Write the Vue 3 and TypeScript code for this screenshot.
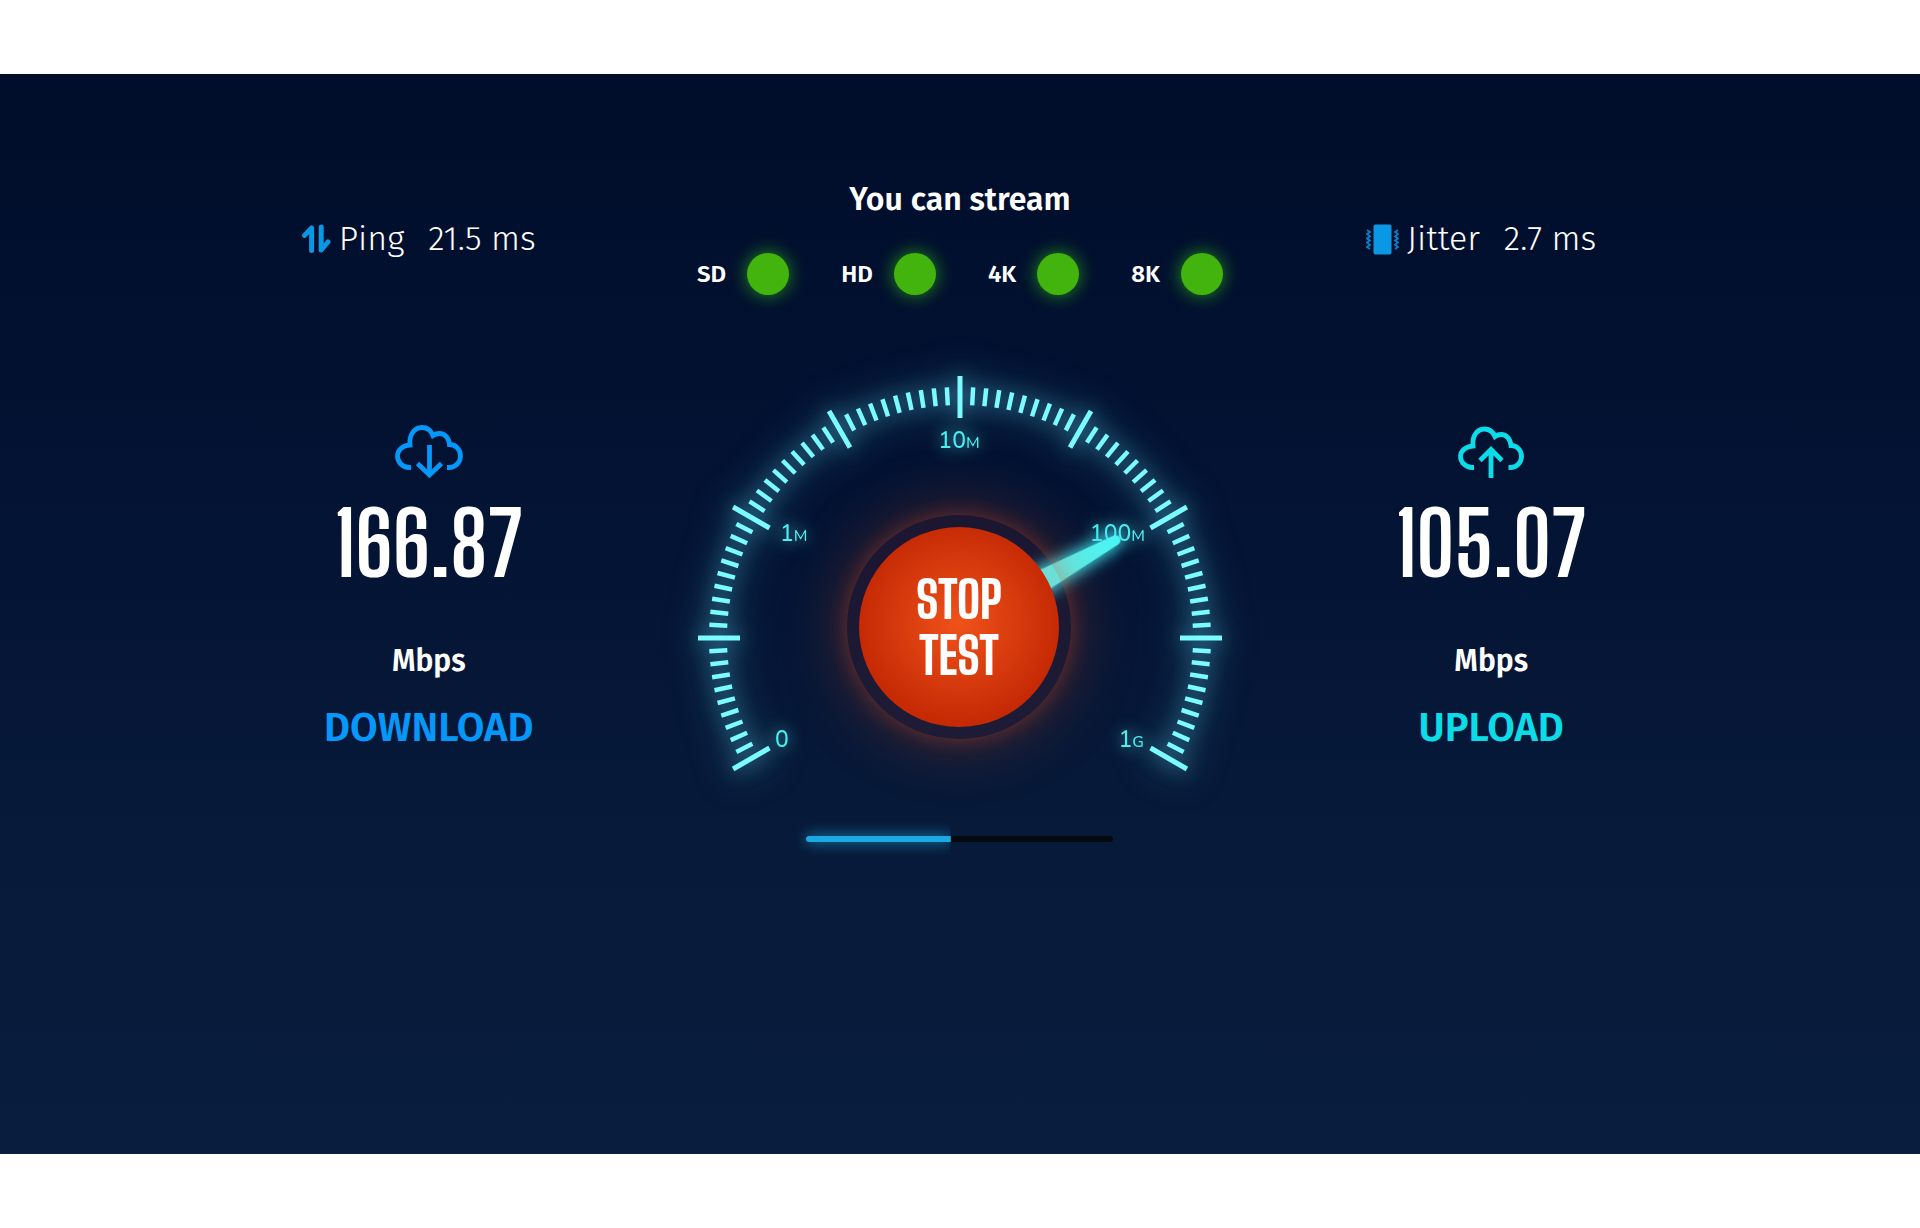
<script setup lang="ts">
interface Tick {
  angle: number
  major: boolean
}

interface GaugeLabel {
  x: number
  y: number
  value: string
  suffix: string
  anchor: 'start' | 'middle' | 'end'
}

const streams: string[] = ['SD', 'HD', '4K', '8K']

// The dial sweeps from -120° to 120°, with a long tick every 30°.
const ticks: Tick[] = Array.from({ length: 81 }, (_, i) => ({
  angle: -120 + i * 3,
  major: i % 10 === 0,
}))

const labels: GaugeLabel[] = [
  { x: 95, y: 387, value: '0', suffix: '', anchor: 'start' },
  { x: 100, y: 181, value: '1', suffix: 'M', anchor: 'start' },
  { x: 279, y: 88, value: '10', suffix: 'M', anchor: 'middle' },
  { x: 465, y: 181, value: '100', suffix: 'M', anchor: 'end' },
  { x: 464, y: 387, value: '1', suffix: 'G', anchor: 'end' },
]

const needleAngle = -29
const progress = 47
</script>

<template>
  <main class="page">
    <section class="panel">
      <div class="board">
        <div class="stat">
          <svg class="stat-icon" width="29" height="30" viewBox="0 0 29 30" aria-hidden="true">
            <g fill="none" stroke="#0a97e4" stroke-width="5" stroke-linecap="round" stroke-linejoin="round">
              <path d="M2.6 11.4 9.6 4V26.6" />
              <path d="M19.2 3V26L26 18" />
            </g>
          </svg>
          <span class="stat-name">Ping</span>
          <span>21.5 ms</span>
        </div>

        <div class="stream">
          <h2>You can stream</h2>
          <ul>
            <li v-for="name in streams" :key="name">
              <span>{{ name }}</span>
              <i class="dot"></i>
            </li>
          </ul>
        </div>

        <div class="stat">
          <svg class="stat-icon" width="33" height="31" viewBox="0 0 33 31" aria-hidden="true">
            <rect x="7.5" y="0.5" width="18" height="30" rx="2" fill="#0a97e4" />
            <g fill="none" stroke="#0a7fc6" stroke-width="1.8">
              <path d="M1 6l3 2-3 2 3 2.5-3 2 3 2-3 2 3 2.5-3 2 3 2" />
              <path d="M32 6l-3 2 3 2-3 2.5 3 2-3 2 3 2-3 2.5 3 2-3 2" />
            </g>
          </svg>
          <span class="stat-name">Jitter</span>
          <span>2.7 ms</span>
        </div>

        <div class="result download">
          <svg width="68" height="54" viewBox="0 0 68 54" aria-hidden="true">
            <g fill="none" stroke="currentColor" stroke-width="4.8">
              <path d="M16 42.5h-2C7.5 42.5 2.5 37 2.5 31S7.5 20.5 15 20C14 10 19 2.5 27 2.5c5 0 9 3 11 8 2-1.5 4-2 6.5-2 5.5 0 9.5 4.5 10 11 6.5 0 11 5 11 11.5S60 42.5 54 42.5h-2" />
              <path d="M34.5 20v29M22.5 38.5l12 11.5 12-11.5" />
            </g>
          </svg>
          <strong>166.87</strong>
          <span class="unit">Mbps</span>
          <span class="caption">DOWNLOAD</span>
        </div>

        <div class="meter">
          <div class="gauge">
            <svg class="dial" viewBox="0 0 560 440" role="img" aria-label="Speed gauge">
              <g class="ticks">
                <line
                  v-for="tick in ticks"
                  :key="tick.angle"
                  x1="280"
                  x2="280"
                  :y1="tick.major ? 16 : 27"
                  :y2="tick.major ? 58 : 45"
                  :stroke-width="tick.major ? 5 : 4.5"
                  :transform="`rotate(${tick.angle} 280 278)`"
                />
              </g>
              <g class="labels">
                <text v-for="label in labels" :key="label.value + label.suffix" :x="label.x" :y="label.y" :text-anchor="label.anchor">
                  {{ label.value }}<tspan class="suffix">{{ label.suffix }}</tspan>
                </text>
              </g>
              <defs>
                <linearGradient id="needle-fill" gradientUnits="userSpaceOnUse" x1="95" y1="0" x2="182" y2="0">
                  <stop offset="0" stop-color="#62f0ea" />
                  <stop offset="0.45" stop-color="#55f2ee" />
                  <stop offset="1" stop-color="#4af5f6" />
                </linearGradient>
              </defs>
              <g :transform="`translate(279 267) rotate(${needleAngle})`">
                <path class="needle" d="M80-12 179-5a5 5 0 0 1 0 10L80 12z" fill="url(#needle-fill)" />
              </g>
            </svg>
            <button type="button">STOP<br />TEST</button>
          </div>
          <div class="track" role="progressbar" aria-label="Test progress" :aria-valuenow="progress" aria-valuemin="0" aria-valuemax="100">
            <div class="fill" :style="{ width: progress + '%' }"></div>
          </div>
        </div>

        <div class="result upload">
          <svg width="68" height="54" viewBox="0 0 68 54" aria-hidden="true">
            <g fill="none" stroke="currentColor" stroke-width="4.8">
              <path d="M17 42.5h-2C8.5 42.5 3.5 37 3.5 31.5S8.5 21.5 16 21C15 11.5 19.5 4 27.5 4c5 0 8.5 3 10.5 7.5 2-1.5 4-2 6-2 5.5 0 9.5 4.5 10 11 6 0 10.5 4.5 10.5 11S59 42.5 53.5 42.5h-2" />
              <path d="M34 53V26M23 35.5 34 24.5l11 11" />
            </g>
          </svg>
          <strong>105.07</strong>
          <span class="unit">Mbps</span>
          <span class="caption">UPLOAD</span>
        </div>
      </div>
    </section>
  </main>
</template>

<style>
body {
  background: #fff;
}
</style>

<style scoped>
.page {
  padding: 74px 0;
  font-family: "Fira Sans", "Open Sans", sans-serif;
  color: #fff;
}

.panel {
  box-sizing: border-box;
  min-height: calc(100vh - 148px);
  padding: 105px 0 64px;
  background: linear-gradient(#000d2b, #041434 45%, #071938 65%, #091d3e);
}

.board {
  display: grid;
  grid-template-columns: repeat(3, minmax(0, 1fr));
  row-gap: 65px;
  width: 83%;
  margin: 0 auto;
}

.stat {
  display: flex;
  align-items: center;
  justify-content: center;
  padding: 4px 20px 0 0;
  font-size: 34px;
  font-weight: 300;
  line-height: 40px;
  white-space: nowrap;
}

.stat-icon {
  margin-right: 8px;
}

.stat-name {
  margin-right: 24px;
}

.stream {
  justify-self: center;
  width: 526px;
}

.stream h2 {
  margin: 0 0 34px;
  font-size: 32px;
  font-weight: 600;
  line-height: 40px;
  text-align: center;
}

.stream ul {
  display: flex;
  justify-content: space-between;
  margin: 0;
  padding: 0;
  list-style: none;
}

.stream li {
  display: flex;
  align-items: center;
  gap: 21px;
  font-size: 24px;
  font-weight: 600;
}

.dot {
  width: 42px;
  height: 42px;
  border-radius: 50%;
  background: #43b40e;
  box-shadow: 0 0 18px rgba(50, 190, 20, 0.75);
}

.result {
  display: flex;
  flex-direction: column;
  align-items: center;
  padding-top: 65px;
}

.result strong {
  margin-top: 15px;
  color: #fff;
  font-family: "Big Shoulders Display", "Open Sans Condensed", sans-serif;
  font-size: 87px;
  font-weight: 700;
  line-height: 100px;
}

.unit {
  margin-top: 47px;
  color: #fff;
  font-size: 30px;
  font-weight: 600;
  line-height: 40px;
}

.caption {
  margin-top: 23px;
  font-size: 40px;
  font-weight: 600;
  line-height: 48px;
}

.download {
  color: #0697fb;
}

.upload {
  color: #0cdce8;
}

.meter {
  display: flex;
  flex-direction: column;
  align-items: center;
}

.gauge {
  position: relative;
  width: 560px;
}

.dial {
  display: block;
  width: 100%;
  overflow: visible;
}

.ticks {
  stroke: #7cfbfd;
  filter: drop-shadow(0 0 10px rgba(90, 220, 245, 0.55)) drop-shadow(0 0 18px rgba(90, 220, 245, 0.55));
}

.labels {
  fill: #4deef0;
  font-family: Nunito, "Open Sans", sans-serif;
  font-size: 23px;
  font-weight: 500;
  filter: drop-shadow(0 0 8px rgba(77, 238, 240, 0.9));
}

.suffix {
  font-size: 16px;
}

.needle {
  filter: drop-shadow(0 0 8px rgba(60, 225, 240, 0.9)) drop-shadow(0 0 6px rgba(60, 225, 240, 0.5));
}

.gauge button {
  position: absolute;
  top: 155px;
  left: 167px;
  box-sizing: border-box;
  width: 224px;
  height: 224px;
  padding: 2px 0 0;
  border: 12px solid rgba(240, 60, 40, 0.1);
  border-radius: 50%;
  background: radial-gradient(circle at 50% 48%, #f05219, #c52a05 100px) padding-box;
  box-shadow: 0 0 20px rgba(235, 80, 30, 0.3), 0 0 64px rgba(235, 80, 30, 0.35);
  color: #fff;
  font-family: "Big Shoulders Display", "Open Sans Condensed", sans-serif;
  font-size: 50px;
  font-weight: 800;
  line-height: 56px;
  cursor: pointer;
}

.track {
  width: 307px;
  height: 6px;
  margin-top: 36px;
  border-radius: 3px;
  background: #050a10;
}

.fill {
  height: 100%;
  border-radius: 3px 0 0 3px;
  background: #1ba9e3;
  box-shadow: 0 0 14px rgba(27, 175, 235, 0.9);
  clip-path: inset(-20px 0 -20px -20px);
}
</style>
